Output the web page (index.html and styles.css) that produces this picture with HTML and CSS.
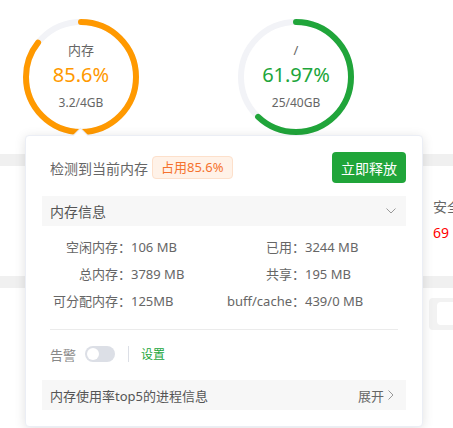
FILE: index.html
```html
<!DOCTYPE html>
<html lang="zh-CN">
<head>
<meta charset="utf-8">
<title>内存</title>
<link rel="stylesheet" href="styles.css">
</head>
<body>
<div class="page">
  <section class="top">
    <div class="gauge">
      <svg class="ring" width="116" height="116" viewBox="0 0 116 116">
        <circle cx="58" cy="58" r="55" class="track"/>
        <circle cx="58" cy="58" r="55" class="arc arc-orange" stroke-dasharray="295.8 345.6" transform="rotate(-90 58 58)"/>
      </svg>
      <div class="gauge-text">
        <span class="g-label">内存</span>
        <span class="g-value orange">85.6%</span>
        <span class="g-sub">3.2/4GB</span>
      </div>
    </div>
    <div class="gauge">
      <svg class="ring" width="116" height="116" viewBox="0 0 116 116">
        <circle cx="58" cy="58" r="55" class="track"/>
        <circle cx="58" cy="58" r="55" class="arc arc-green" stroke-dasharray="214.2 345.6" transform="rotate(-90 58 58)"/>
      </svg>
      <div class="gauge-text">
        <span class="g-label">/</span>
        <span class="g-value green">61.97%</span>
        <span class="g-sub">25/40GB</span>
      </div>
    </div>
  </section>
  <div class="band"></div>
  <section class="row2">
    <div class="stat">
      <span class="stat-label">安全</span>
      <span class="stat-num">69</span>
    </div>
  </section>
  <div class="band"></div>
  <section class="row3">
    <div class="greybox"><div class="whitebox"></div></div>
  </section>

  <div class="popover">
    <div class="arrow"></div>
    <div class="pop-head">
      <div class="pop-title">检测到当前内存<span class="tag">占用85.6%</span></div>
      <button class="btn">立即释放</button>
    </div>
    <div class="collapse">
      <span>内存信息</span>
      <svg class="chev" width="10" height="6" viewBox="0 0 10 6"><path d="M0.5 0.5 L5 5 L9.5 0.5" fill="none" stroke="#999" stroke-width="1"/></svg>
    </div>
    <div class="info">
      <span class="k">空闲内存：</span><span class="v">106 MB</span>
      <span class="k">已用：</span><span class="v">3244 MB</span>
      <span class="k">总内存：</span><span class="v">3789 MB</span>
      <span class="k">共享：</span><span class="v">195 MB</span>
      <span class="k">可分配内存：</span><span class="v">125MB</span>
      <span class="k">buff/cache：</span><span class="v">439/0 MB</span>
    </div>
    <div class="divider"></div>
    <div class="alarm">
      <span class="alarm-label">告警</span>
      <span class="switch"><span class="knob"></span></span>
      <span class="vsep"></span>
      <span class="link">设置</span>
    </div>
    <div class="collapse">
      <span class="proc">内存使用率top5的进程信息</span>
      <span class="expand">展开<svg class="chev-r" width="6" height="10" viewBox="0 0 6 10"><path d="M0.5 0.5 L5 5 L0.5 9.5" fill="none" stroke="#999" stroke-width="1"/></svg></span>
    </div>
  </div>
</div>
</body>
</html>
```

FILE: styles.css
```css
html, body {
  margin: 0;
  padding: 0;
  background: #fff;
}
body {
  font-family: "Noto Sans", "Noto Sans CJK SC", sans-serif;
  color: #666;
  width: 453px;
  height: 428px;
  overflow: hidden;
}
.page {
  position: relative;
  width: 453px;
  height: 428px;
}
.top {
  height: 154px;
  box-sizing: border-box;
  padding: 19px 0 0 23px;
  display: flex;
  gap: 99px;
}
.gauge {
  display: grid;
  width: 116px;
  height: 116px;
}
.ring, .gauge-text {
  grid-area: 1 / 1;
}
.track {
  fill: none;
  stroke: #f2f3f7;
  stroke-width: 6;
}
.arc {
  fill: none;
  stroke-width: 6;
  stroke-linecap: round;
}
.arc-orange { stroke: #ff9900; }
.arc-green { stroke: #20a53a; }
.gauge-text {
  display: flex;
  flex-direction: column;
  align-items: center;
  padding-top: 22px;
}
.g-label {
  font-size: 13px;
  line-height: 18px;
  color: #666;
}
.g-value {
  font-size: 20px;
  line-height: 26px;
  margin-top: 3px;
}
.orange { color: #ff9900; }
.green { color: #20a53a; }
.g-sub {
  font-size: 12px;
  line-height: 16px;
  margin-top: 7px;
  color: #666;
}
.band {
  height: 12px;
  background: #f0f0f0;
}
.row2 {
  height: 110px;
  box-sizing: border-box;
  padding: 31px 0 0 433px;
}
.stat {
  display: flex;
  flex-direction: column;
  white-space: nowrap;
}
.stat-label {
  font-size: 14px;
  line-height: 20px;
  color: #666;
}
.stat-num {
  font-size: 14px;
  line-height: 20px;
  margin-top: 6px;
  color: #ff0000;
}
.row3 {
  padding: 10px 0 0 429px;
}
.greybox {
  height: 32px;
  background: #f2f2f2;
  border-radius: 4px 0 0 4px;
  padding: 4px 0 0 8px;
  box-sizing: border-box;
}
.whitebox {
  height: 23px;
  background: #fff;
  border-radius: 4px 0 0 4px;
}

/* popover */
.popover {
  position: absolute;
  left: 25px;
  top: 135px;
  width: 398px;
  box-sizing: border-box;
  background: #fff;
  border: 1px solid #ebeef5;
  border-radius: 4px;
  box-shadow: 0 2px 12px rgba(0, 0, 0, 0.12);
  padding: 16px 16px 16px 16px;
}
.arrow {
  position: absolute;
  top: -6px;
  left: 49px;
  width: 10px;
  height: 10px;
  background: #fff;
  border-top: 1px solid #ebeef5;
  border-left: 1px solid #ebeef5;
  transform: rotate(45deg);
}
.pop-head {
  display: flex;
  align-items: center;
  justify-content: space-between;
  height: 31px;
  margin-bottom: 13px;
  padding-left: 8px;
}
.pop-title {
  display: flex;
  align-items: center;
  font-size: 14px;
  color: #666;
}
.tag {
  margin-left: 4px;
  height: 23px;
  line-height: 21px;
  box-sizing: border-box;
  padding: 0 8px;
  font-size: 13px;
  color: #f5722f;
  background: #fff2e8;
  border: 1px solid #fde0cb;
  border-radius: 4px;
}
.btn {
  width: 74px;
  height: 31px;
  border: none;
  border-radius: 4px;
  background: #20a53a;
  color: #fff;
  font-family: inherit;
  font-size: 14px;
  padding: 0;
}
.collapse {
  height: 30px;
  background: #f7f7f7;
  display: flex;
  align-items: center;
  justify-content: space-between;
  padding: 0 10px 0 8px;
  font-size: 14px;
  color: #555;
}
.proc {
  font-size: 13px;
}
.expand {
  display: flex;
  align-items: center;
  gap: 4px;
  font-size: 13px;
  color: #666;
  margin-right: 2px;
}
.chev { display: block; }
.chev-r { display: block; }
.info {
  display: grid;
  grid-template-columns: 89px 85px 89px auto;
  grid-auto-rows: 27px;
  padding-top: 8px;
  font-size: 13px;
  line-height: 27px;
  color: #666;
}
.k {
  text-align: right;
  white-space: nowrap;
}
.v {
  white-space: nowrap;
}
.divider {
  margin: 14px 8px 0 8px;
  border-top: 1px solid #ebebeb;
}
.alarm {
  display: flex;
  align-items: center;
  height: 32px;
  margin: 8px 0 10px 0;
  padding-left: 8px;
}
.alarm-label {
  font-size: 13px;
  color: #888;
}
.switch {
  margin-left: 9px;
  width: 30px;
  height: 16px;
  border-radius: 8px;
  background: #dcdfe6;
  position: relative;
  display: block;
}
.knob {
  position: absolute;
  left: 2px;
  top: 2px;
  width: 12px;
  height: 12px;
  border-radius: 50%;
  background: #fff;
}
.vsep {
  display: block;
  width: 1px;
  height: 16px;
  background: #dcdfe6;
  margin-left: 13px;
}
.link {
  margin-left: 12px;
  font-size: 12px;
  color: #20a53a;
}
```
